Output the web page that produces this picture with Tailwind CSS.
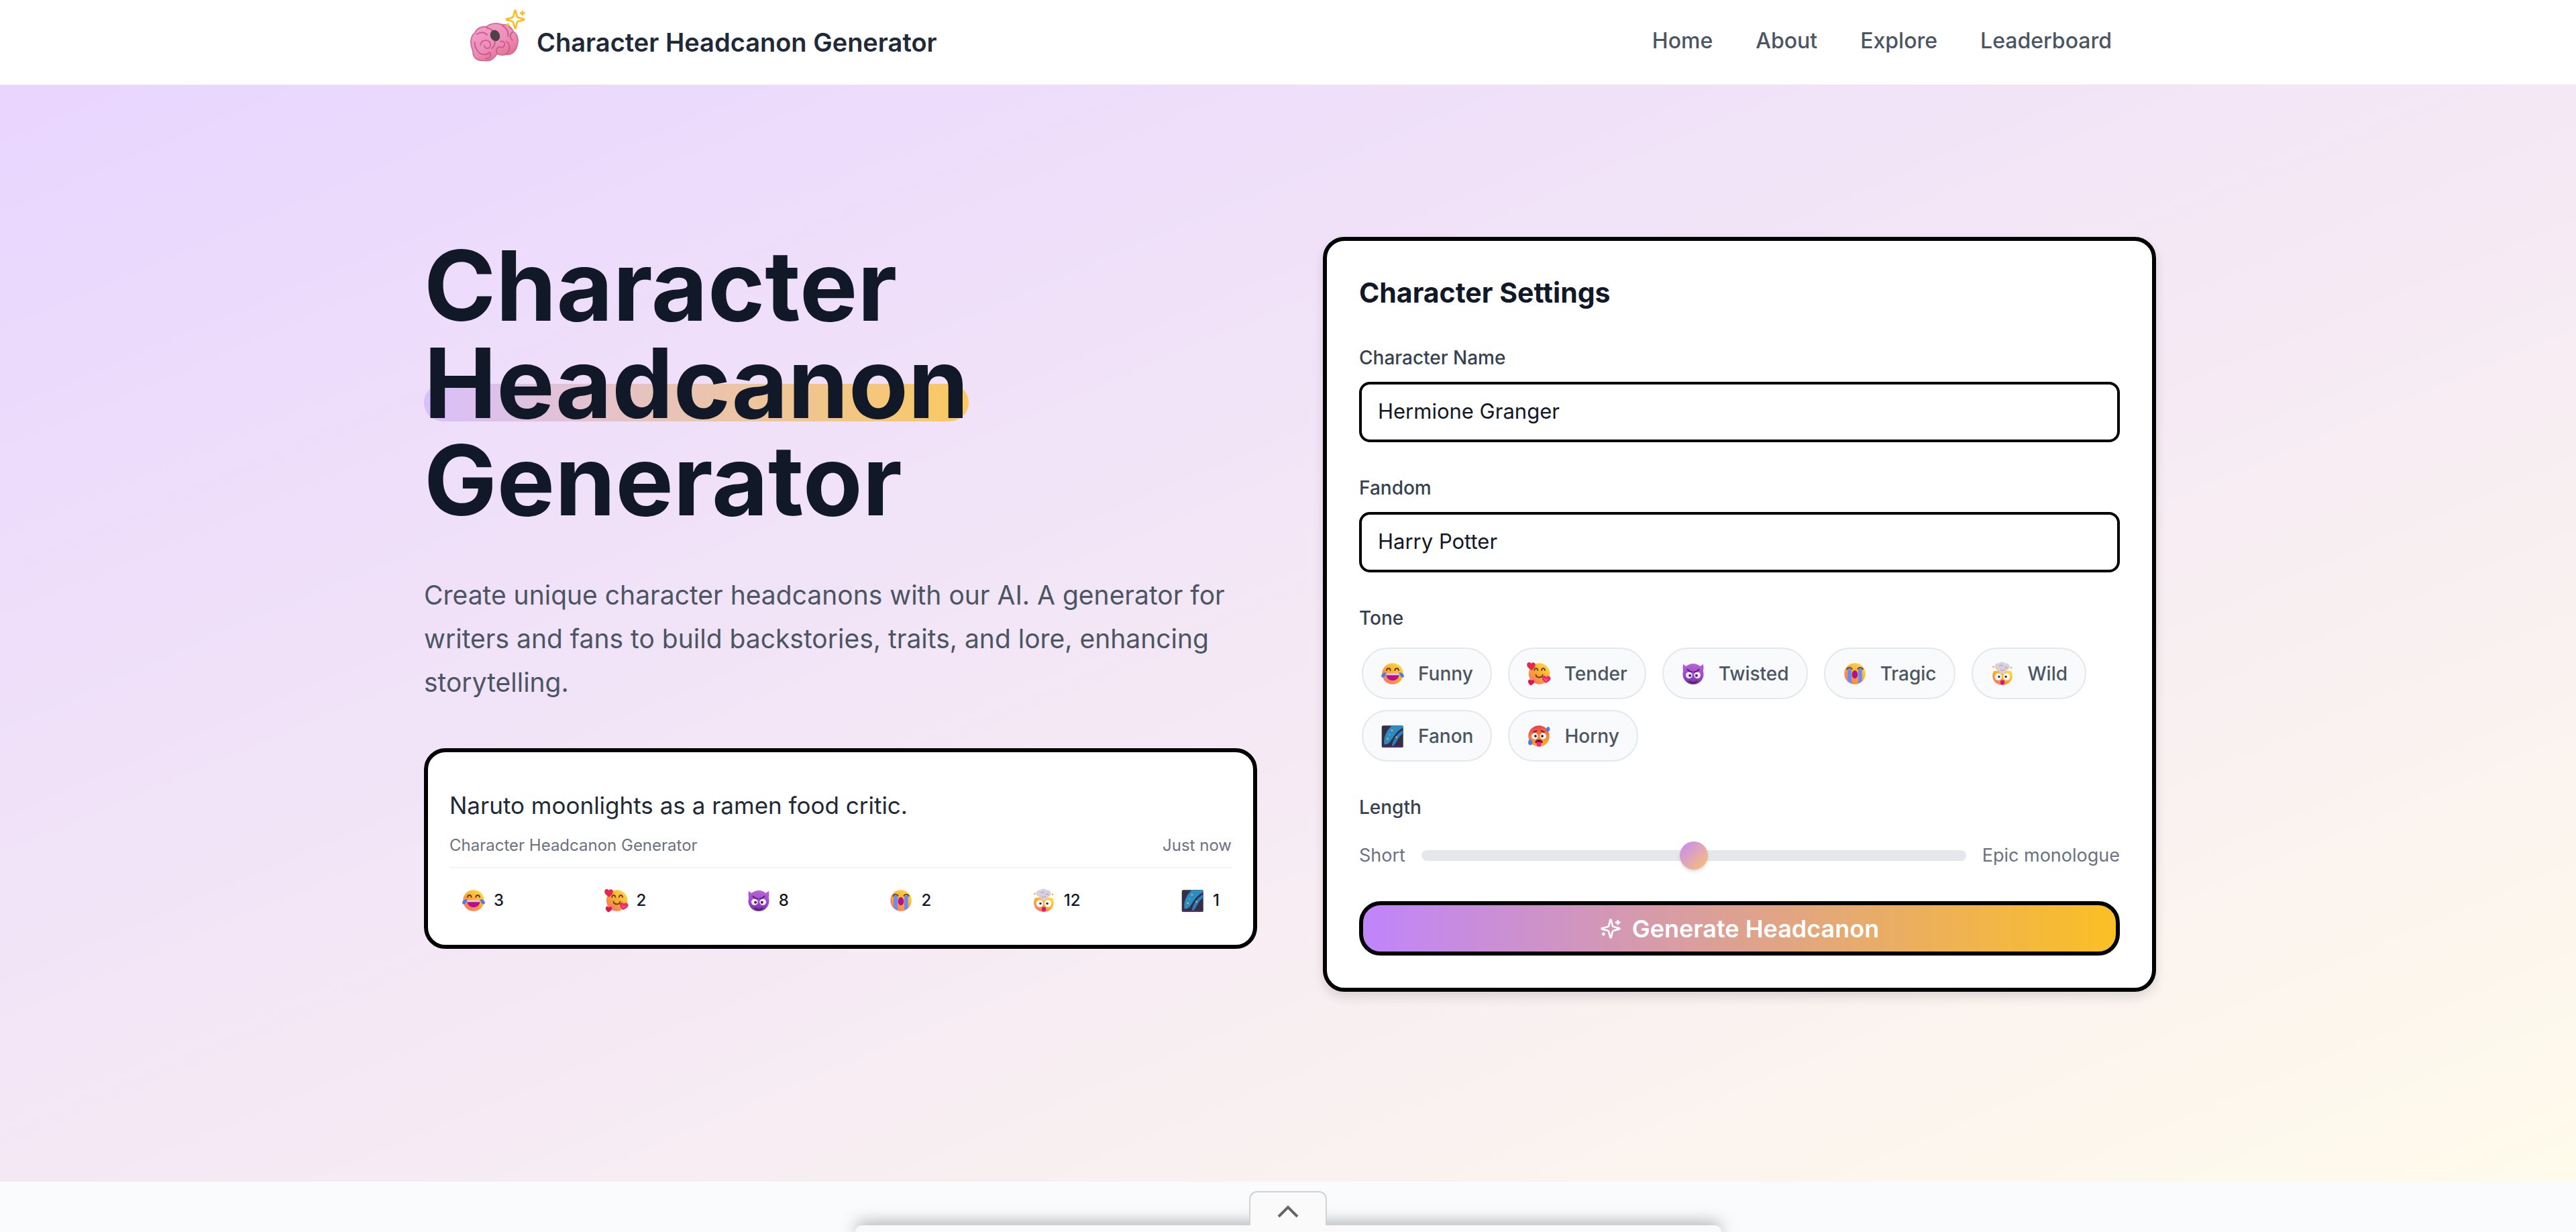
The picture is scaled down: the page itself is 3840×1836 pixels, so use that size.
<!DOCTYPE html>
<html lang="en">
<head>
    <meta charset="UTF-8">
    <meta name="viewport" content="width=device-width, initial-scale=1.0">
    <title>Character Headcanon Generator</title>
    <script src="https://cdn.jsdelivr.net/npm/@tailwindcss/browser@4"></script>
</head>
<body class="min-h-screen bg-[#f9fbfd] font-['Inter','Liberation_Sans',sans-serif] text-[#111827]">

    <!-- Shared icons -->
    <svg class="absolute w-0 h-0" aria-hidden="true">
        <defs>
            <linearGradient id="face" x1="1" y1="0" x2="0.2" y2="1">
                <stop offset="0" stop-color="#ffe34f"/>
                <stop offset="0.55" stop-color="#fdab2b"/>
                <stop offset="1" stop-color="#f5736f"/>
            </linearGradient>
            <linearGradient id="devil" x1="0.5" y1="0" x2="0.4" y2="1">
                <stop offset="0" stop-color="#b864d6"/>
                <stop offset="0.6" stop-color="#9a45cf"/>
                <stop offset="1" stop-color="#6d3196"/>
            </linearGradient>
            <linearGradient id="hot" x1="0.4" y1="0" x2="0.6" y2="1">
                <stop offset="0" stop-color="#ee3a4d"/>
                <stop offset="0.5" stop-color="#f8813a"/>
                <stop offset="1" stop-color="#fdb02c"/>
            </linearGradient>
            <linearGradient id="brain" x1="0.2" y1="0" x2="0.8" y2="1">
                <stop offset="0" stop-color="#f3a0cb"/>
                <stop offset="0.55" stop-color="#ee8db8"/>
                <stop offset="1" stop-color="#e06a80"/>
            </linearGradient>
        </defs>
        <symbol id="funny" viewBox="0 0 32 32">
            <circle cx="16" cy="16" r="14" fill="url(#face)"/>
            <path d="M8 11.500c.5-3.500 4.500-3.500 5 0M19 11.500c.5-3.500 4.500-3.500 5 0" fill="none" stroke="#5a3a3f" stroke-width="1.700" stroke-linecap="round"/>
            <path d="M7.500 16h17c.3 5.500-3.500 9-8.500 9s-8.800-3.500-8.500-9z" fill="#b5108f"/>
            <path d="M7.500 15.500h17v2.500h-17z" fill="#e6c6ee"/>
            <path d="M8 14.500c-3-.5-6.500 1-7 4.200-.3 2.300 2.200 3 3.800 1.600C6.500 18.800 6.500 16 8 14.500zM24 14.500c3-.5 6.500 1 7 4.200.3 2.300-2.200 3-3.800 1.600-1.700-1.500-1.700-4.300-3.200-5.800z" fill="#4a78f6"/>
        </symbol>
        <symbol id="tender" viewBox="0 0 32 32">
            <circle cx="16.500" cy="16" r="14" fill="url(#face)"/>
            <path d="M10 11.500c.5-3.500 4-3.500 4.500 0M19.500 11.500c.5-3.500 4-3.500 4.500 0M12 17.500c1 4.500 8 4.500 9 0" fill="none" stroke="#6a4030" stroke-width="1.700" stroke-linecap="round"/>
            <path d="M6.500 11.500C3 9.500-.5 6.500.3 3.200 1 .5 4.300.3 5.800 2.500 7.600.2 11 .8 11.300 3.800c.3 3-2.500 5.700-4.800 7.700z" fill="#e4294f"/>
            <path d="M25 28.500c-3-2.500-5.500-5.500-4.300-8.300 1-2.200 4-2.200 5.200.2 1.800-2 4.900-1.400 5.600 1.100.8 3-3 5.500-6.500 7z" fill="#ee2a66"/>
            <path d="M5 31.500c-2.500-2-4-4.500-3-6.500.8-1.600 3-1.600 3.800.2 1.600-1.600 4-1 4.200 1 .2 2.300-2.500 4.300-5 5.300z" fill="#e0144f"/>
            <path d="M23.500 22.500l1.800 2.500 2.500-2" fill="none" stroke="#f98ab0" stroke-width="1"/>
        </symbol>
        <symbol id="twisted" viewBox="0 0 32 32">
            <path d="M3 3c-1.500 5-.5 9 1 12l9-8.500C8.500 7 4.500 6 3 3zM29 3c1.500 5 .5 9-1 12l-9-8.500C23.500 7 27.500 6 29 3z" fill="#b05ad8"/>
            <circle cx="16" cy="16.500" r="13.800" fill="url(#devil)"/>
            <circle cx="10.500" cy="18" r="4.300" fill="#f6effa"/>
            <circle cx="21.500" cy="18" r="4.300" fill="#f6effa"/>
            <circle cx="11.700" cy="18.500" r="1.800" fill="#4b2060"/>
            <circle cx="20.300" cy="18.500" r="1.800" fill="#4b2060"/>
            <path d="M8.500 10.500c1.500 2 3.500 3 6 3.200M23.500 10.500c-1.500 2-3.500 3-6 3.200M11 26c3 2.500 7 2.500 10 0" fill="none" stroke="#4b2060" stroke-width="1.600" stroke-linecap="round"/>
        </symbol>
        <symbol id="tragic" viewBox="0 0 32 32">
            <circle cx="16" cy="16" r="14" fill="url(#face)"/>
            <path d="M6.500 9.500h5V29l-5-3zM20.500 9.500h5V26l-5 3z" fill="#6a8bf3"/>
            <path d="M5.500 10c1-2.500 5-2.500 6.500-.5M26.500 10c-1-2.500-5-2.500-6.500-.5" fill="none" stroke="#5a4a50" stroke-width="1.800" stroke-linecap="round"/>
            <ellipse cx="16" cy="17" rx="3.800" ry="5.500" fill="#b5108f"/>
        </symbol>
        <symbol id="wild" viewBox="0 0 32 32">
            <path d="M4 13c3-2 21-2 24 0 3.500 8-1 18-12 18S.5 21 4 13z" fill="url(#face)"/>
            <path d="M7 9.500C4 6 7 1.500 11 2.300c2-2.500 7-2.500 9 0 4.500-.8 7 3.700 4.500 7-2 2.200-4.500 1.700-4.500 3.700-1 4-7 4-8 0 0-2-3-1.500-5-3.500z" fill="#d9d0de"/>
            <path d="M12 6c1.500-2 4-1.500 4 .5M19 8c2-1.500 3.500 0 3 1.500M13 11c2 1 4 1 6-.5" fill="none" stroke="#b5a8c0" stroke-width="1.200"/>
            <circle cx="4" cy="7" r="1.200" fill="#f8a82c"/>
            <circle cx="27.500" cy="8" r="1.100" fill="#f8a82c"/>
            <circle cx="10.500" cy="20" r="4.600" fill="#fff"/>
            <circle cx="21.500" cy="20" r="4.600" fill="#fff"/>
            <circle cx="11.500" cy="20" r="1.600" fill="#4a3038"/>
            <circle cx="20.500" cy="20" r="1.600" fill="#4a3038"/>
            <ellipse cx="16" cy="27.500" rx="2.800" ry="3" fill="#d4147f"/>
        </symbol>
        <symbol id="fanon" viewBox="0 0 32 32">
            <rect x="1.500" y="2" width="28.500" height="29" rx="2" fill="#352f45"/>
            <path d="M1.500 29h28.500a2 2 0 0 1-2 2H3.500a2 2 0 0 1-2-2z" fill="#5a2a6e"/>
            <path d="M15 2h14.500v3C22 9 19 14 15 20c-3 5-6 7.500-10 7-1.500-8 2-18 10-25z" fill="#2b8cc4"/>
            <path d="M30 8v4c-7 5-8 12-13 17h-2C16 21 22 12 30 8z" fill="#2b7fc0"/>
            <circle cx="15" cy="8.500" r="1.200" fill="#c9b84a"/>
            <circle cx="9.500" cy="19.500" r="1.300" fill="#c9b84a"/>
            <circle cx="21" cy="17.500" r="1.200" fill="#c9b84a"/>
            <circle cx="12" cy="14" r="0.900" fill="#55c6e8"/>
        </symbol>
        <symbol id="horny" viewBox="0 0 32 32">
            <circle cx="16" cy="16" r="14" fill="url(#hot)"/>
            <path d="M9 10.500l4-1.500M23 10.500L19 9" fill="none" stroke="#6a2030" stroke-width="1.600" stroke-linecap="round"/>
            <circle cx="10.500" cy="16" r="4.200" fill="#fff"/>
            <circle cx="21.500" cy="16" r="4.200" fill="#fff"/>
            <circle cx="11.500" cy="16" r="1.700" fill="#4a2030"/>
            <circle cx="20.500" cy="16" r="1.700" fill="#4a2030"/>
            <path d="M11 25c0-3 2.200-4.500 5-4.500s5 1.500 5 4.500z" fill="#7a1230"/>
            <path d="M13 24h6v3.500c0 3.300-6 3.300-6 0z" fill="#f0268a"/>
            <path d="M28 3.500c2 0 3 2 2.300 4.500-.6 2.200-3.800 2.500-4.500.5-.6-2 .5-4.300 2.200-5zM4 20c2.500 1 4 3.500 3.300 6-.8 2.500-4.500 2.500-5.300 0-.6-2 .3-4.600 2-6z" fill="#4a78f6"/>
        </symbol>
        <symbol id="sparkles" viewBox="0 0 24 24">
            <path d="M9.937 15.500A2 2 0 0 0 8.500 14.063l-6.135-1.582a.5.5 0 0 1 0-.962L8.500 9.936A2 2 0 0 0 9.937 8.500l1.582-6.135a.5.5 0 0 1 .963 0L14.063 8.500A2 2 0 0 0 15.500 9.937l6.135 1.581a.5.5 0 0 1 0 .964L15.500 14.063a2 2 0 0 0-1.437 1.437l-1.582 6.135a.5.5 0 0 1-.963 0zM20 3v4M22 5h-4M4 17v2M5 18H3" fill="none" stroke="currentColor" stroke-width="2" stroke-linecap="round" stroke-linejoin="round"/>
        </symbol>
    </svg>

    <!-- Header -->
    <header class="bg-white border-b border-gray-200">
        <div class="max-w-[2588px] h-[126px] mx-auto pl-[74px] pr-[66px] flex items-center justify-between">
            <a href="#" class="flex items-center gap-4">
                <svg class="w-[84px] h-[84px] overflow-visible" viewBox="0 0 84 84" aria-hidden="true">
                    <path d="M8 28c3-7 10-10 17-9 7-6 17-6 24-3 7-1 14 4 16 10 7 4 8 13 6 20-2 10-9 15-17 14-5 2-9 1-13-1-5 8-12 12-19 10C11 70 5 65 5 55 1 46 0 34 8 28z" fill="url(#brain)" stroke="#cf6f9d" stroke-width="2"/>
                    <path d="M11 30c6-4 12-3 15 1M25 20c6 2 9 3 12 8M49 17c6 4 10 9 8 16M64 27c-5 3-4 9 0 12M16 46c2-9 14-9 15-1 1 7-9 8-9 2M12 55c4 6 13 7 18 2 3 6-1 11-6 9M41 58c-3-6 2-11 6-8M46 41c8-3 8 9 1 9M55 41c6 4 6 13 0 18M37 38c2 6 0 10-4 13M8 42c-1 5 1 9 4 13" fill="none" stroke="#c95f8f" stroke-width="2" stroke-linecap="round"/>
                    <ellipse cx="38" cy="32" rx="7" ry="8.500" transform="rotate(-25 38 32)" fill="#4d4247"/>
                    <svg x="52" y="-8" width="32" height="32" class="text-[#fbbf24] overflow-visible"><use href="#sparkles" width="32" height="32"/></svg>
                </svg>
                <span class="text-[38px] leading-[48px] font-semibold text-[#1f2937]">Character Headcanon Generator</span>
            </a>
            <nav class="flex gap-16 pb-1 text-[32px] leading-[40px] font-medium text-[#4b5563]">
                <a href="#">Home</a>
                <a href="#">About</a>
                <a href="#">Explore</a>
                <a href="#">Leaderboard</a>
            </nav>
        </div>
    </header>

    <!-- Hero -->
    <main class="bg-linear-to-br/srgb from-[#e9d5ff] to-[#fffbeb] pt-[226px] pb-[283px]">
        <div class="max-w-[2588px] mx-auto pl-[6px] grid grid-cols-2 gap-[98px] items-start">

            <div class="flex flex-col gap-[66px]">
                <h1 class="text-[145px] leading-[145px] font-bold">
                    Character<br>
                    <span class="relative inline-block isolate">
                        <span class="absolute inset-x-0 bottom-[15px] h-14 rounded-full bg-linear-to-r/srgb from-[#d9bffd] to-[#fac961] -z-10"></span>
                        Headcanon
                    </span><br>
                    Generator
                </h1>
                <p class="text-[39px] leading-[65px] text-[#4b5563]">Create unique character headcanons with our AI. A generator for writers and fans to build backstories, traits, and lore, enhancing storytelling.</p>

                <!-- Sample headcanon -->
                <article class="bg-white border-6 border-black rounded-[32px] px-8 pt-[51px] pb-12">
                    <p class="text-[35px] leading-[56px] text-[#1f2937]">Naruto moonlights as a ramen food critic.</p>
                    <div class="flex justify-between mt-4 pb-4 border-b-2 border-gray-100 text-[24px] leading-[32px] text-[#6b7280]">
                        <span>Character Headcanon Generator</span>
                        <span>Just now</span>
                    </div>
                    <div class="flex justify-between pt-[30px] text-[24px] leading-[36px] font-medium">
                        <button class="flex items-center gap-3 px-[18px]"><svg class="size-9"><use href="#funny"/></svg>3</button>
                        <button class="flex items-center gap-3 px-[18px]"><svg class="size-9"><use href="#tender"/></svg>2</button>
                        <button class="flex items-center gap-3 px-[18px]"><svg class="size-9"><use href="#twisted"/></svg>8</button>
                        <button class="flex items-center gap-3 px-[18px]"><svg class="size-9"><use href="#tragic"/></svg>2</button>
                        <button class="flex items-center gap-3 px-[18px]"><svg class="size-9"><use href="#wild"/></svg>12</button>
                        <button class="flex items-center gap-3 px-[18px]"><svg class="size-9"><use href="#fanon"/></svg>1</button>
                    </div>
                </article>
            </div>

            <!-- Settings -->
            <form class="bg-white border-6 border-black rounded-[32px] p-12 flex flex-col gap-12 shadow-[0_8px_16px_rgba(0,0,0,0.12)]">
                <h2 class="text-[41px] leading-[58px] font-bold">Character Settings</h2>

                <div class="flex flex-col gap-4">
                    <label for="name" class="text-[28px] leading-[40px] font-medium text-[#374151]">Character Name</label>
                    <input id="name" type="text" value="Hermione Granger" class="h-[90px] px-6 pb-1 border-4 border-black rounded-2xl text-[31px]">
                </div>

                <div class="flex flex-col gap-4">
                    <label for="fandom" class="text-[28px] leading-[40px] font-medium text-[#374151]">Fandom</label>
                    <input id="fandom" type="text" value="Harry Potter" class="h-[90px] px-6 pb-1 border-4 border-black rounded-2xl text-[31px]">
                </div>

                <div class="flex flex-col gap-6">
                    <span id="tone" class="text-[28px] leading-[40px] font-medium text-[#374151]">Tone</span>
                    <div role="group" aria-labelledby="tone" class="flex flex-wrap gap-x-6 gap-y-4 px-1 text-[28px] font-medium text-[#4b5563]">
                        <button type="button" class="flex items-center gap-5 h-[77px] px-[26px] border-2 border-gray-200 rounded-full bg-gray-50"><svg class="size-9"><use href="#funny"/></svg>Funny</button>
                        <button type="button" class="flex items-center gap-5 h-[77px] px-[26px] border-2 border-gray-200 rounded-full bg-gray-50"><svg class="size-9"><use href="#tender"/></svg>Tender</button>
                        <button type="button" class="flex items-center gap-5 h-[77px] px-[26px] border-2 border-gray-200 rounded-full bg-gray-50"><svg class="size-9"><use href="#twisted"/></svg>Twisted</button>
                        <button type="button" class="flex items-center gap-5 h-[77px] px-[26px] border-2 border-gray-200 rounded-full bg-gray-50"><svg class="size-9"><use href="#tragic"/></svg>Tragic</button>
                        <button type="button" class="flex items-center gap-5 h-[77px] px-[26px] border-2 border-gray-200 rounded-full bg-gray-50"><svg class="size-9"><use href="#wild"/></svg>Wild</button>
                        <button type="button" class="flex items-center gap-5 h-[77px] px-[26px] border-2 border-gray-200 rounded-full bg-gray-50"><svg class="size-9"><use href="#fanon"/></svg>Fanon</button>
                        <button type="button" class="flex items-center gap-5 h-[77px] px-[26px] border-2 border-gray-200 rounded-full bg-gray-50"><svg class="size-9"><use href="#horny"/></svg>Horny</button>
                    </div>
                </div>

                <div class="flex flex-col gap-8">
                    <label for="length" class="text-[28px] leading-[40px] font-medium text-[#374151]">Length</label>
                    <div class="flex items-center gap-6 text-[27px] leading-[40px] text-[#6b7280]">
                        <span>Short</span>
                        <input id="length" type="range" min="0" max="100" value="50" class="flex-1 h-4 appearance-none rounded-full bg-gray-200 [&::-webkit-slider-thumb]:appearance-none [&::-webkit-slider-thumb]:size-[42px] [&::-webkit-slider-thumb]:rounded-full [&::-webkit-slider-thumb]:bg-linear-to-br [&::-webkit-slider-thumb]:from-[#c884f5] [&::-webkit-slider-thumb]:to-[#fdbf5a] [&::-webkit-slider-thumb]:shadow-md">
                        <span>Epic monologue</span>
                    </div>
                </div>

                <button type="submit" class="h-[81px] flex items-center justify-center gap-4 border-6 border-black rounded-[32px] bg-linear-to-r/srgb from-[#c084fc] to-[#fbbf24] text-[36px] font-semibold text-white">
                    <svg class="size-8"><use href="#sparkles"/></svg>
                    Generate Headcanon
                </button>
            </form>
        </div>
    </main>

    <!-- Bottom drawer, collapsed -->
    <div class="fixed bottom-0 inset-x-0 flex flex-col items-center">
        <button aria-label="Open drawer" class="relative z-10 w-[116px] h-[51px] flex items-center justify-center pt-2 border-2 border-b-0 border-[#d0d2d4] rounded-t-xl bg-[#fafafa] text-[#666]">
            <svg class="w-8 h-5" viewBox="0 0 32 20" fill="none" stroke="currentColor" stroke-width="4"><path d="M2 17L16 3l14 14"/></svg>
        </button>
        <div class="w-1/3 min-w-[1291px] h-[10px] rounded-t-xl bg-[#fafafa] shadow-[0_0_24px_rgba(0,0,0,0.6)]"></div>
    </div>

</body>
</html>
